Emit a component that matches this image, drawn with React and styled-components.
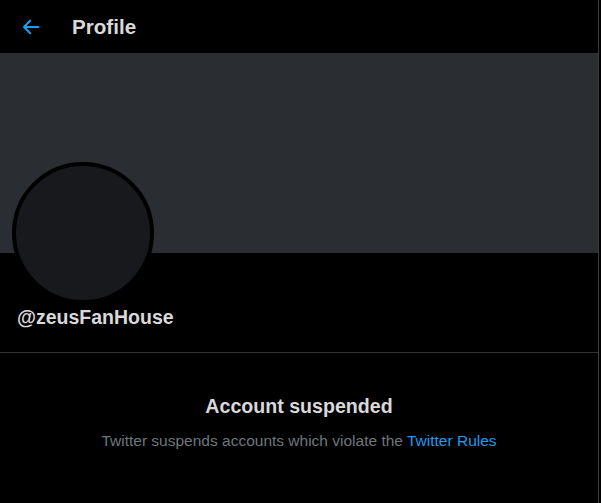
import styled, { createGlobalStyle } from "styled-components";

const Global = createGlobalStyle`
  html, body {
    margin: 0;
    background: #000;
    font-family: "Liberation Sans", Arial, sans-serif;
  }
`;

const Page = styled.div`
  width: 598px;
  height: 503px;
  border-right: 1px solid #3a3d40;
  background: #000;
`;

const Header = styled.div`
  height: 53px;
  display: flex;
  align-items: center;
  padding: 0 16px;
  gap: 26px;
`;

const BackBtn = styled.button`
  width: 30px;
  height: 30px;
  border: none;
  background: none;
  padding: 0;
  display: flex;
  align-items: center;
  justify-content: center;
  color: #1d9bf0;
  cursor: pointer;
`;

const Title = styled.h2`
  margin: 0;
  font-size: 20.6px;
  font-weight: 700;
  color: #d9d9d9;
`;

const Banner = styled.div`
  height: 200px;
  background: #2a2e32;
`;

const Info = styled.div`
  display: flex;
  flex-direction: column;
  align-items: flex-start;
  padding: 0 12px;
  height: 99px;
  border-bottom: 1px solid #2f3336;
`;

const Avatar = styled.div`
  width: 134px;
  height: 134px;
  margin-top: -91px;
  border-radius: 50%;
  border: 4px solid #000;
  background: #17191c;
  flex-shrink: 0;
`;

const Handle = styled.div`
  margin: 2px 0 0 5px;
  font-size: 19.5px;
  font-weight: 700;
  color: #d9d9d9;
`;

const Notice = styled.div`
  display: flex;
  flex-direction: column;
  align-items: center;
  padding-top: 42px;
  gap: 14px;
`;

const NoticeTitle = styled.div`
  font-size: 19.6px;
  font-weight: 700;
  color: #d9d9d9;
`;

const NoticeText = styled.div`
  font-size: 15.5px;
  color: #6e767d;
`;

const Link = styled.a`
  color: #1d9bf0;
  text-decoration: none;
`;

export default function App() {
  return (
    <>
      <Global />
      <Page>
        <Header>
          <BackBtn>
            <svg width="20" height="20" viewBox="0 0 24 24" fill="none" stroke="currentColor" strokeWidth="2.4" strokeLinecap="round" strokeLinejoin="round">
              <path d="M21 12H3.5M11 4.5L3.5 12l7.5 7.5" />
            </svg>
          </BackBtn>
          <Title>Profile</Title>
        </Header>
        <Banner />
        <Info>
          <Avatar />
          <Handle>@zeusFanHouse</Handle>
        </Info>
        <Notice>
          <NoticeTitle>Account suspended</NoticeTitle>
          <NoticeText>
            Twitter suspends accounts which violate the <Link href="#">Twitter Rules</Link>
          </NoticeText>
        </Notice>
      </Page>
    </>
  );
}
